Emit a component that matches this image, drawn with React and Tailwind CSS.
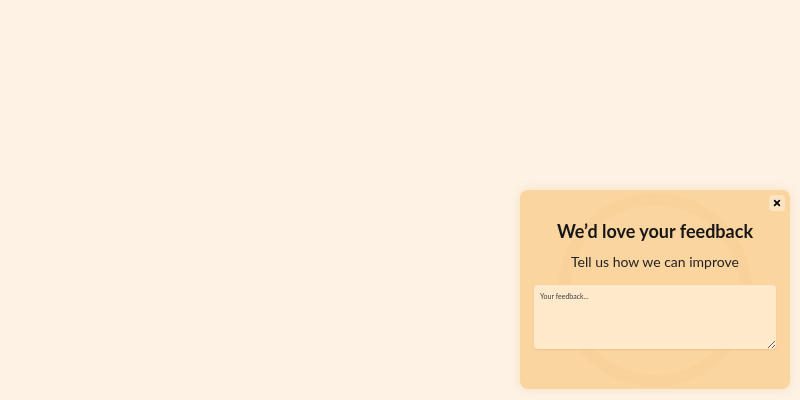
import { useState } from "react";

function FeedbackWidget() {
    const [text, setText] = useState("");
    return (
        <div className="fixed right-[10px] bottom-[11px] w-[270px] h-[199px] rounded-lg bg-[#fbd5a0] shadow-[0_0_8px_rgba(230,190,140,0.35)] overflow-hidden">
            {/* faint decorative ring */}
            <div className="absolute left-[38px] top-[3px] w-[194px] h-[194px] rounded-full border-[12px] border-[#f9d29b] pointer-events-none"></div>
            <button className="absolute top-[5px] right-[5px] w-4 h-4 rounded-sm bg-[#fde4c0] flex items-center justify-center text-black">
                <svg width="8" height="8" viewBox="0 0 10 10" fill="none" stroke="currentColor" strokeWidth="2.2" strokeLinecap="round">
                    <path d="M2 2L8 8M8 2L2 8" />
                </svg>
            </button>
            <div className="relative flex flex-col items-center pt-[29px] px-[14px]">
                <h2 className="text-[18px] leading-6 font-bold text-[#161616]">We’d love your feedback</h2>
                <p className="mt-[9px] text-[14px] leading-5 text-[#1f1f1f]">Tell us how we can improve</p>
                <textarea
                    value={text}
                    onChange={(e) => setText(e.target.value)}
                    placeholder="Your feedback..."
                    className="mt-[13px] w-full h-[64px] rounded-sm bg-[#feeaca] px-[6px] py-[5px] text-[7px] leading-3 text-[#333] placeholder:text-[#444] outline-none shadow-[0_1px_2px_rgba(200,150,90,0.25)]"
                />
            </div>
        </div>
    );
}

export default function App() {
    return (
        <div className="w-[800px] h-[400px] bg-[#fdf2e3]" style={{ fontFamily: "Lato, 'Noto Sans', sans-serif" }}>
            <FeedbackWidget />
        </div>
    );
}
